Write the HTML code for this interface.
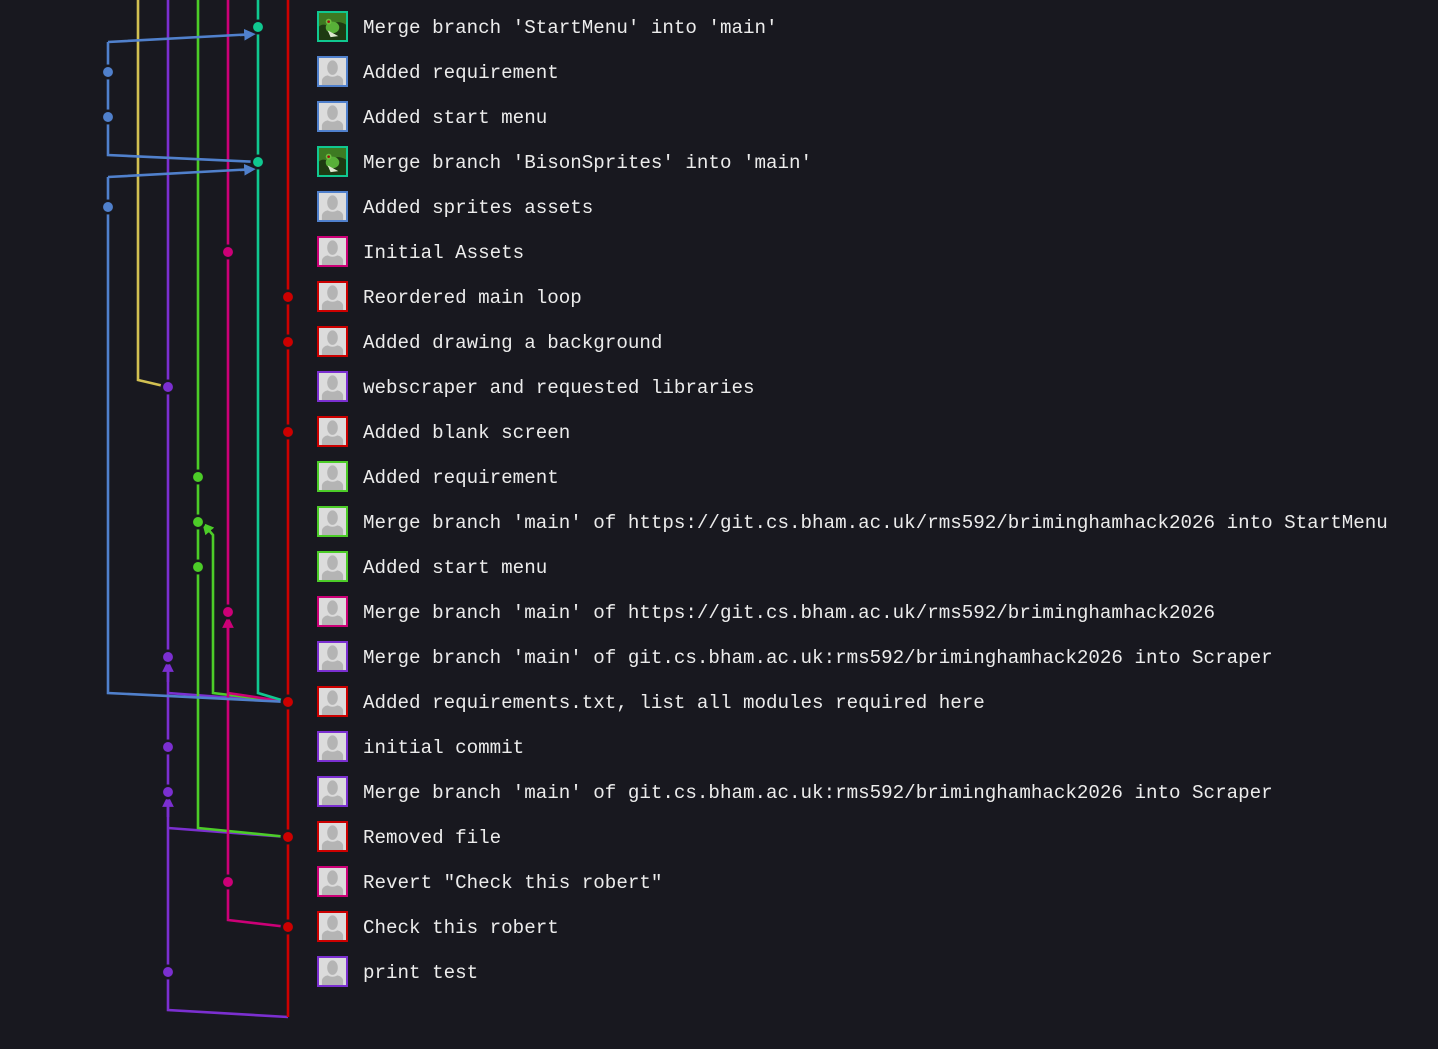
<!DOCTYPE html>
<html><head><meta charset="utf-8">
<style>
html,body{margin:0;padding:0;background:#18181f;width:1438px;height:1049px;overflow:hidden}
.r{position:absolute;left:363px;font-family:"Liberation Mono",monospace;font-size:19.2px;color:#ececec;line-height:20px;white-space:pre}
.a{position:absolute;left:317px;width:27px;height:27px;border:2.5px solid;background:#dcdcdc;overflow:hidden}
.a svg{display:block}
path{stroke-width:2.6px}
</style></head><body>
<svg width="1438" height="1049" style="position:absolute;left:0;top:0" fill="none">
<defs>
<marker id="m" viewBox="0 0 10 10" refX="5" refY="5" markerWidth="4.5" markerHeight="4.5" orient="auto-start-reverse"><path d="M0 0L10 5L0 10z" fill="context-stroke" style="stroke-width:0"/></marker>
</defs>
<path d="M138 0V380L168 387" stroke="#d2c052"/>
<path d="M168 0V1010L288 1017" stroke="#7b2fd0"/>
<path d="M168 693L288 702M168 828L288 837" stroke="#7b2fd0"/>
<path d="M168 682V666" stroke="#7b2fd0" marker-end="url(#m)"/>
<path d="M168 817V801" stroke="#7b2fd0" marker-end="url(#m)"/>
<path d="M198 0V828L288 837" stroke="#4ccc28"/>
<path d="M288 702L213 693V535L206 527" stroke="#4ccc28" marker-end="url(#m)"/>
<path d="M228 0V920L288 927M228 693L288 702" stroke="#cc0077"/>
<path d="M228 640V622" stroke="#cc0077" marker-end="url(#m)"/>
<path d="M258 0V693L288 702" stroke="#10c890"/>
<path d="M288 0V1017" stroke="#cc0000"/>
<path d="M108 42L246 34.5M108 42V155L258 162M108 177L246 169.5M108 177V693L288 702" stroke="#5080cc"/>
<path d="M240 35L250 34.4" stroke="#5080cc" marker-end="url(#m)"/>
<path d="M240 170L250 169.4" stroke="#5080cc" marker-end="url(#m)"/>
<g stroke="#18181f" style="stroke-width:2.5px">
<circle cx="258" cy="27" r="6.2" fill="#10c890"/>
<circle cx="108" cy="72" r="6.2" fill="#5080cc"/>
<circle cx="108" cy="117" r="6.2" fill="#5080cc"/>
<circle cx="258" cy="162" r="6.2" fill="#10c890"/>
<circle cx="108" cy="207" r="6.2" fill="#5080cc"/>
<circle cx="228" cy="252" r="6.2" fill="#cc0077"/>
<circle cx="288" cy="297" r="6.2" fill="#cc0000"/>
<circle cx="288" cy="342" r="6.2" fill="#cc0000"/>
<circle cx="168" cy="387" r="6.2" fill="#7b2fd0"/>
<circle cx="288" cy="432" r="6.2" fill="#cc0000"/>
<circle cx="198" cy="477" r="6.2" fill="#4ccc28"/>
<circle cx="198" cy="522" r="6.2" fill="#4ccc28"/>
<circle cx="198" cy="567" r="6.2" fill="#4ccc28"/>
<circle cx="228" cy="612" r="6.2" fill="#cc0077"/>
<circle cx="168" cy="657" r="6.2" fill="#7b2fd0"/>
<circle cx="288" cy="702" r="6.2" fill="#cc0000"/>
<circle cx="168" cy="747" r="6.2" fill="#7b2fd0"/>
<circle cx="168" cy="792" r="6.2" fill="#7b2fd0"/>
<circle cx="288" cy="837" r="6.2" fill="#cc0000"/>
<circle cx="228" cy="882" r="6.2" fill="#cc0077"/>
<circle cx="288" cy="927" r="6.2" fill="#cc0000"/>
<circle cx="168" cy="972" r="6.2" fill="#7b2fd0"/>
</g>
<symbol id="p" viewBox="0 0 28 28"><rect width="28" height="28" fill="#dcdcdc"/><ellipse cx="14" cy="10" rx="5.5" ry="7.5" fill="#b4b4b4"/><path d="M3 28V23Q4 19 9 18Q14 21 19 18Q24 19 25 23V28Z" fill="#b4b4b4" style="stroke-width:0"/></symbol>
<symbol id="f" viewBox="0 0 28 28"><rect width="28" height="28" fill="#1e3a12"/><path d="M0 0H28V12Q18 6 10 14Q4 10 0 14Z" fill="#3d7a22" style="stroke-width:0"/><ellipse cx="14" cy="15" rx="7" ry="6" fill="#58b038"/><circle cx="10" cy="9" r="3" fill="#6cc040"/><circle cx="10" cy="9" r="1.4" fill="#a01010"/><path d="M9 18L20 24L12 25Z" fill="#dfe8d0" style="stroke-width:0"/></symbol>
</svg>

<div class="a" style="top:11px;border-color:#10c890"><svg width="27" height="27"><use href="#f"/></svg></div>
<div class="a" style="top:56px;border-color:#5080cc"><svg width="27" height="27"><use href="#p"/></svg></div>
<div class="a" style="top:101px;border-color:#5080cc"><svg width="27" height="27"><use href="#p"/></svg></div>
<div class="a" style="top:146px;border-color:#10c890"><svg width="27" height="27"><use href="#f"/></svg></div>
<div class="a" style="top:191px;border-color:#5080cc"><svg width="27" height="27"><use href="#p"/></svg></div>
<div class="a" style="top:236px;border-color:#cc0077"><svg width="27" height="27"><use href="#p"/></svg></div>
<div class="a" style="top:281px;border-color:#cc0000"><svg width="27" height="27"><use href="#p"/></svg></div>
<div class="a" style="top:326px;border-color:#cc0000"><svg width="27" height="27"><use href="#p"/></svg></div>
<div class="a" style="top:371px;border-color:#7b2fd0"><svg width="27" height="27"><use href="#p"/></svg></div>
<div class="a" style="top:416px;border-color:#cc0000"><svg width="27" height="27"><use href="#p"/></svg></div>
<div class="a" style="top:461px;border-color:#4ccc28"><svg width="27" height="27"><use href="#p"/></svg></div>
<div class="a" style="top:506px;border-color:#4ccc28"><svg width="27" height="27"><use href="#p"/></svg></div>
<div class="a" style="top:551px;border-color:#4ccc28"><svg width="27" height="27"><use href="#p"/></svg></div>
<div class="a" style="top:596px;border-color:#cc0077"><svg width="27" height="27"><use href="#p"/></svg></div>
<div class="a" style="top:641px;border-color:#7b2fd0"><svg width="27" height="27"><use href="#p"/></svg></div>
<div class="a" style="top:686px;border-color:#cc0000"><svg width="27" height="27"><use href="#p"/></svg></div>
<div class="a" style="top:731px;border-color:#7b2fd0"><svg width="27" height="27"><use href="#p"/></svg></div>
<div class="a" style="top:776px;border-color:#7b2fd0"><svg width="27" height="27"><use href="#p"/></svg></div>
<div class="a" style="top:821px;border-color:#cc0000"><svg width="27" height="27"><use href="#p"/></svg></div>
<div class="a" style="top:866px;border-color:#cc0077"><svg width="27" height="27"><use href="#p"/></svg></div>
<div class="a" style="top:911px;border-color:#cc0000"><svg width="27" height="27"><use href="#p"/></svg></div>
<div class="a" style="top:956px;border-color:#7b2fd0"><svg width="27" height="27"><use href="#p"/></svg></div>

<div class="r" style="top:18px">Merge branch 'StartMenu' into 'main'</div>
<div class="r" style="top:63px">Added requirement</div>
<div class="r" style="top:108px">Added start menu</div>
<div class="r" style="top:153px">Merge branch 'BisonSprites' into 'main'</div>
<div class="r" style="top:198px">Added sprites assets</div>
<div class="r" style="top:243px">Initial Assets</div>
<div class="r" style="top:288px">Reordered main loop</div>
<div class="r" style="top:333px">Added drawing a background</div>
<div class="r" style="top:378px">webscraper and requested libraries</div>
<div class="r" style="top:423px">Added blank screen</div>
<div class="r" style="top:468px">Added requirement</div>
<div class="r" style="top:513px">Merge branch 'main' of https://git.cs.bham.ac.uk/rms592/briminghamhack2026 into StartMenu</div>
<div class="r" style="top:558px">Added start menu</div>
<div class="r" style="top:603px">Merge branch 'main' of https://git.cs.bham.ac.uk/rms592/briminghamhack2026</div>
<div class="r" style="top:648px">Merge branch 'main' of git.cs.bham.ac.uk:rms592/briminghamhack2026 into Scraper</div>
<div class="r" style="top:693px">Added requirements.txt, list all modules required here</div>
<div class="r" style="top:738px">initial commit</div>
<div class="r" style="top:783px">Merge branch 'main' of git.cs.bham.ac.uk:rms592/briminghamhack2026 into Scraper</div>
<div class="r" style="top:828px">Removed file</div>
<div class="r" style="top:873px">Revert "Check this robert"</div>
<div class="r" style="top:918px">Check this robert</div>
<div class="r" style="top:963px">print test</div>
</body></html>
